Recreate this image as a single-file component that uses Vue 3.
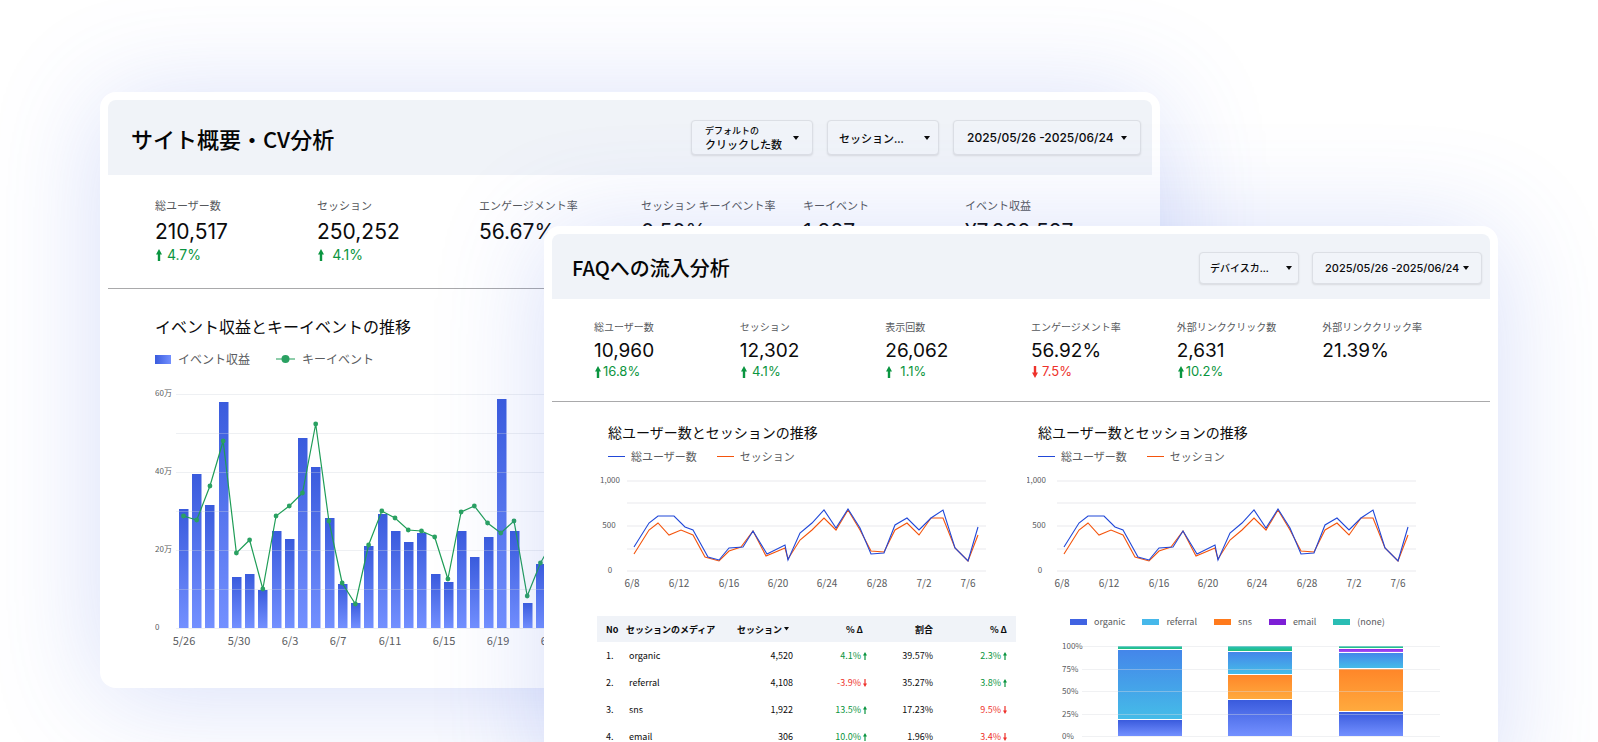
<script setup>
const overviewKpis = [
  { label: '総ユーザー数', value: '210,517', delta: '4.7%', up: true },
  { label: 'セッション', value: '250,252', delta: '4.1%', up: true },
  { label: 'エンゲージメント率', value: '56.67%' },
  { label: 'セッション キーイベント率', value: '0.50%' },
  { label: 'キーイベント', value: '1,227' },
  { label: 'イベント収益', value: '¥7,222,527' },
]

const faqKpis = [
  { label: '総ユーザー数', value: '10,960', delta: '16.8%', up: true },
  { label: 'セッション', value: '12,302', delta: '4.1%', up: true },
  { label: '表示回数', value: '26,062', delta: '1.1%', up: true },
  { label: 'エンゲージメント率', value: '56.92%', delta: '7.5%', up: false },
  { label: '外部リンククリック数', value: '2,631', delta: '10.2%', up: true },
  { label: '外部リンククリック率', value: '21.39%' },
]

const ARROW_UP = 'M3 0 6 5.5H4.2V12H1.8V5.5H0Z'
const ARROW_DOWN = 'M3 12 6 6.5H4.2V0H1.8V6.5H0Z'
const SMALL_UP = 'M2 0 4 3.5H2.6V8H1.4V3.5H0Z'
const SMALL_DOWN = 'M2 8 4 4.5H2.6V0H1.4V4.5H0Z'

/* revenue bars with key-event line */
const BASE = 248
const barHeights = [119, 154, 123, 226, 51, 54, 38, 97, 89, 190, 161, 110, 44, 25, 82, 114, 97, 86, 95, 54, 46, 97, 71, 91, 229, 97, 25, 64, 80, 70]
const lineHeights = [112, 108, 142, 187, 75, 88, 39, 112, 122, 135, 204, 107, 45, 24, 83, 117, 110, 98, 97, 91, 49, 116, 122, 105, 95, 107, 32, 65, 88, 76]
const bars = barHeights.map((h, i) => ({ x: 24 + Math.round(i * 13.24), y: BASE - h, h }))
const dots = lineHeights.map((h, i) => ({ x: 28.5 + i * 13.22, y: BASE - h }))
const dotLine = dots.map((d) => `${d.x},${d.y}`).join(' ')
const comboGrid = [14, 53, 92, 131, 170, 209, 248]
const comboY = [['60万', 14], ['40万', 92], ['20万', 170], ['0', 248]]
const comboX = [['5/26', 29], ['5/30', 84], ['6/3', 135], ['6/7', 183], ['6/11', 235], ['6/15', 289], ['6/19', 343], ['6/23', 397]]

/* users and sessions lines */
const users = [[37, 75], [52, 51], [61, 44], [77, 44], [88, 55], [96, 58], [111, 85], [122, 88], [132, 76], [146, 75], [156, 59], [170, 82], [188, 73], [191, 88], [203, 61], [215, 51], [227, 38], [239, 56], [251, 37], [263, 56], [274, 82], [287, 81], [298, 53], [310, 46], [322, 58], [334, 46], [346, 38], [358, 76], [371, 89], [381, 55]]
const sessions = [[37, 82], [52, 58], [61, 51], [72, 63], [84, 58], [96, 63], [108, 85], [122, 89], [132, 79], [144, 75], [156, 59], [169, 84], [188, 76], [191, 87], [203, 68], [215, 58], [227, 46], [239, 58], [251, 38], [263, 58], [274, 79], [287, 80], [298, 58], [310, 51], [322, 63], [334, 46], [346, 46], [358, 76], [371, 89], [381, 63]]
const asPoints = (list) => list.map((p) => p.join(',')).join(' ')
const trendGrid = [9, 31, 54, 77, 99]
const trendX = [['6/8', 35], ['6/12', 82], ['6/16', 132], ['6/20', 181], ['6/24', 230], ['6/28', 280], ['7/2', 327], ['7/6', 371]]
const trends = [
  { id: 'a', ticks: [['1,000', 13, 9], ['500', 12, 54], ['0', 13, 99]] },
  { id: 'b', ticks: [['1,000', 9, 9], ['500', 12, 54], ['0', 13, 99]] },
]

const rows = [
  { no: '1.', media: 'organic', count: '4,520', d1: '4.1%', up1: true, share: '39.57%', d2: '2.3%', up2: true },
  { no: '2.', media: 'referral', count: '4,108', d1: '-3.9%', up1: false, share: '35.27%', d2: '3.8%', up2: true },
  { no: '3.', media: 'sns', count: '1,922', d1: '13.5%', up1: true, share: '17.23%', d2: '9.5%', up2: false },
  { no: '4.', media: 'email', count: '306', d1: '10.0%', up1: true, share: '1.96%', d2: '3.4%', up2: false },
]

const channels = ['organic', 'referral', 'sns', 'email', '(none)']
const channelKey = (name) => name.replace(/[()]/g, '')
const stackY = [['100%', 8], ['75%', 31], ['50%', 53], ['25%', 76], ['0%', 98]]
const stacks = [
  { x: 91, parts: [['none', 8, 3], ['referral', 12, 69], ['organic', 82, 16]] },
  { x: 201, parts: [['none', 8, 5], ['referral', 14, 22], ['sns', 37, 24], ['organic', 62, 36]] },
  { x: 312, parts: [['none', 8, 2], ['email', 11, 3], ['referral', 15, 15], ['sns', 31, 42], ['organic', 74, 24]] },
]
</script>

<template>
  <main class="stage">
    <section class="card overview">
      <header class="head">
        <h1>サイト概要・CV分析</h1>
        <div class="controls">
          <label class="control metric">
            <span class="stack">
              <span class="prefix">デフォルトの</span>
              <select><option>クリックした数</option></select>
            </span>
          </label>
          <label class="control media">
            <select aria-label="セッション"><option>セッション...</option></select>
          </label>
          <button type="button" class="control date">2025/05/26 -2025/06/24</button>
        </div>
      </header>

      <dl class="kpis">
        <div v-for="k in overviewKpis" :key="k.label" class="kpi">
          <dt>{{ k.label }}</dt>
          <dd class="value">{{ k.value }}</dd>
          <dd v-if="k.delta" class="delta" :class="k.up ? 'up' : 'down'">
            <svg width="6" height="12" viewBox="0 0 6 12"><path :d="k.up ? ARROW_UP : ARROW_DOWN" /></svg>
            <span>{{ k.delta }}</span>
          </dd>
        </div>
      </dl>

      <div class="panel">
        <h2>イベント収益とキーイベントの推移</h2>
        <ul class="legend">
          <li><i class="swatch"></i>イベント収益</li>
          <li>
            <svg width="19" height="10" viewBox="0 0 19 10"><path d="M0 5H19" stroke="#1f9d57" /><circle cx="9.5" cy="5" r="4" fill="#2aa162" /></svg>
            キーイベント
          </li>
        </ul>
        <svg class="combo" width="425" height="280" viewBox="0 0 425 280">
          <defs>
            <linearGradient id="bar" x1="0" y1="0" x2="0" y2="1">
              <stop offset="0" stop-color="#3a5bdd" /><stop offset="1" stop-color="#7390ff" />
            </linearGradient>
          </defs>
          <rect v-for="b in bars" :key="b.x" :x="b.x" :y="b.y" width="9.5" :height="b.h" fill="url(#bar)" />
          <path v-for="y in comboGrid" :key="y" :d="`M21 ${y + 0.5}H425`" stroke="#cfd3dc" stroke-opacity=".35" />
          <polyline :points="dotLine" fill="none" stroke="#1f9d57" stroke-width="1.2" />
          <circle v-for="d in dots" :key="d.x" :cx="d.x" :cy="d.y" r="2.4" fill="#2aa162" />
          <text v-for="t in comboY" :key="t[0]" x="0" :y="t[1] + 2" font-size="8">{{ t[0] }}</text>
          <text v-for="t in comboX" :key="t[0]" :x="t[1]" y="265" font-size="11" text-anchor="middle">{{ t[0] }}</text>
        </svg>
      </div>
    </section>

    <section class="card faq">
      <header class="head">
        <h1>FAQへの流入分析</h1>
        <div class="controls">
          <label class="control device">
            <select aria-label="デバイスカテゴリ"><option>デバイスカ...</option></select>
          </label>
          <button type="button" class="control date">2025/05/26 -2025/06/24</button>
        </div>
      </header>

      <dl class="kpis">
        <div v-for="k in faqKpis" :key="k.label" class="kpi">
          <dt>{{ k.label }}</dt>
          <dd class="value">{{ k.value }}</dd>
          <dd v-if="k.delta" class="delta" :class="k.up ? 'up' : 'down'">
            <svg width="6" height="12" viewBox="0 0 6 12"><path :d="k.up ? ARROW_UP : ARROW_DOWN" /></svg>
            <span>{{ k.delta }}</span>
          </dd>
        </div>
      </dl>

      <div class="grid">
        <article v-for="t in trends" :key="t.id" class="trend">
          <h2>総ユーザー数とセッションの推移</h2>
          <ul class="legend">
            <li><i class="dash blue"></i>総ユーザー数</li>
            <li><i class="dash orange"></i>セッション</li>
          </ul>
          <svg class="plot" viewBox="0 0 419 120">
            <path v-for="y in trendGrid" :key="y" :d="`M30 ${y}H389`" stroke="#f1f1f3" stroke-width="1.4" />
            <polyline :points="asPoints(sessions)" fill="none" stroke="#f4540c" stroke-width="1.1" />
            <polyline :points="asPoints(users)" fill="none" stroke="#2148d8" stroke-width="1.1" />
            <text v-for="k in t.ticks" :key="k[0]" :x="k[1]" :y="k[2] + 2" font-size="8" text-anchor="middle">{{ k[0] }}</text>
            <text v-for="k in trendX" :key="k[0]" :x="k[1]" y="115" font-size="10" text-anchor="middle">{{ k[0] }}</text>
          </svg>
        </article>

        <table>
          <thead>
            <tr>
              <th class="no">No</th>
              <th class="name">セッションのメディア</th>
              <th class="count">セッション <svg width="5" height="6" viewBox="0 0 5 6"><path d="M0 0H5L2.5 3.5Z" /></svg></th>
              <th class="change">% Δ</th>
              <th class="share">割合</th>
              <th class="change">% Δ</th>
            </tr>
          </thead>
          <tbody>
            <tr v-for="r in rows" :key="r.no">
              <td class="no">{{ r.no }}</td>
              <td class="name">{{ r.media }}</td>
              <td class="count">{{ r.count }}</td>
              <td class="change" :class="r.up1 ? 'up' : 'down'">
                {{ r.d1 }} <svg width="4" height="8" viewBox="0 0 4 8"><path :d="r.up1 ? SMALL_UP : SMALL_DOWN" /></svg>
              </td>
              <td class="share">{{ r.share }}</td>
              <td class="change" :class="r.up2 ? 'up' : 'down'">
                {{ r.d2 }} <svg width="4" height="8" viewBox="0 0 4 8"><path :d="r.up2 ? SMALL_UP : SMALL_DOWN" /></svg>
              </td>
            </tr>
          </tbody>
        </table>

        <article class="share-chart">
          <ul class="channels">
            <li v-for="c in channels" :key="c"><i :class="channelKey(c)"></i>{{ c }}</li>
          </ul>
          <svg class="plot" viewBox="0 0 419 120">
            <defs>
              <linearGradient id="organic" x1="0" y1="0" x2="0" y2="1"><stop offset="0" stop-color="#3a5bdd" /><stop offset="1" stop-color="#7390ff" /></linearGradient>
              <linearGradient id="referral" x1="0" y1="0" x2="0" y2="1"><stop offset="0" stop-color="#4486ea" /><stop offset="1" stop-color="#45bce8" /></linearGradient>
              <linearGradient id="sns" x1="0" y1="0" x2="0" y2="1"><stop offset="0" stop-color="#ff8629" /><stop offset="1" stop-color="#ffaa3e" /></linearGradient>
              <linearGradient id="email" x1="0" y1="0" x2="0" y2="1"><stop offset="0" stop-color="#8a2be2" /><stop offset="1" stop-color="#a855f7" /></linearGradient>
              <linearGradient id="none" x1="0" y1="0" x2="0" y2="1"><stop offset="0" stop-color="#2cc0bd" /><stop offset="1" stop-color="#1fc07c" /></linearGradient>
            </defs>
            <template v-for="s in stacks" :key="s.x">
              <rect v-for="p in s.parts" :key="p[0]" :x="s.x" :y="p[1]" width="64" :height="p[2]" :fill="`url(#${p[0]})`" />
            </template>
            <path v-for="t in stackY" :key="t[0]" :d="`M55 ${t[1] + 0.5}H413`" stroke="#d9dbe2" stroke-opacity=".4" />
            <text v-for="t in stackY" :key="t[0]" x="35" :y="t[1] + 3" font-size="8">{{ t[0] }}</text>
          </svg>
        </article>
      </div>
    </section>
  </main>
</template>

<style>
body {
  background: #fff;
  overflow: hidden;
}
</style>

<style scoped>
* {
  box-sizing: border-box;
  margin: 0;
}

.stage {
  display: grid;
  grid-template-columns: 100px 444fr 616fr 338fr 100px;
  grid-template-rows: 92px 134px auto;
  height: 100vh;
  overflow: hidden;
  color: #0b0b0c;
  font-family: "Noto Sans CJK JP", "Noto Sans", sans-serif;
}

.card {
  align-self: start;
  min-width: 0;
  padding: 8px;
  background: #fff;
  border-radius: 16px;
  box-shadow: 0 8px 110px rgba(72, 104, 226, 0.22);
}

.overview {
  grid-area: 2 / 2 / 4 / 4;
}

.faq {
  grid-area: 3 / 3 / 4 / 5;
}

.head {
  display: flex;
  align-items: center;
  justify-content: space-between;
  background: #f0f3f8;
  border-radius: 8px 8px 0 0;
}

.overview .head {
  height: 75px;
  padding: 0 11px 0 23px;
}

.faq .head {
  height: 65px;
  padding: 2px 8px 0 20px;
}

h1,
h2 {
  font-weight: 400;
  white-space: nowrap;
}

h1 {
  font-weight: 500;
  color: #050505;
}

.overview h1 {
  font-size: 22px;
}

.faq h1 {
  font-size: 20px;
}

.controls {
  display: flex;
}

.overview .controls {
  gap: 14px;
}

.faq .controls {
  gap: 13px;
}

.control {
  display: flex;
  align-items: center;
  justify-content: space-between;
  border: 1px solid #dcdfe5;
  border-radius: 4px;
  background: #f1f4f9;
  box-shadow: 0 1px 2px rgba(0, 0, 0, 0.1);
  color: #0b0b0c;
  font-family: inherit;
  font-weight: 500;
  white-space: nowrap;
}

.control::after {
  content: "";
  border: 3px solid transparent;
  border-top: 4px solid #0b0b0c;
  border-bottom: 0;
}

.overview .control {
  height: 35px;
  padding: 0 13px;
  font-size: 11px;
}

.faq .control {
  height: 32px;
  font-size: 10px;
}

.overview .metric {
  width: 122px;
}

.overview .media {
  width: 112px;
  padding: 0 8px 0 11px;
}

.overview .control.date {
  width: 188px;
  font-size: 12px;
}

.faq .device {
  width: 100px;
  padding: 0 6px 0 10px;
}

.faq .control.date {
  width: 170px;
  padding: 0 12px;
  font-size: 11px;
}

.control.date {
  font-family: Inter, sans-serif;
}

.stack {
  display: flex;
  flex-direction: column;
}

.prefix {
  font-size: 9px;
  line-height: 12px;
}

select {
  appearance: none;
  padding: 0;
  border: 0;
  background: transparent;
  color: inherit;
  font: inherit;
  line-height: 14px;
}

.kpis {
  display: grid;
  grid-template-columns: repeat(6, minmax(0, 1fr));
  border-bottom: 1px solid #a9a9ab;
}

.overview .kpis {
  height: 114px;
  padding: 21px 25px 0 47px;
}

.faq .kpis {
  height: 103px;
  padding: 20px 22px 0 42px;
}

.kpi {
  white-space: nowrap;
}

.kpi dt {
  color: #56585c;
}

.value,
.delta {
  font-family: Inter, sans-serif;
}

.overview dt {
  font-size: 11px;
  line-height: 18px;
}

.overview .value {
  margin-top: 4px;
  font-size: 21px;
  line-height: 28px;
}

.faq dt {
  font-size: 10px;
  line-height: 16px;
}

.faq .value {
  margin-top: 4px;
  font-size: 19px;
  line-height: 24px;
}

.delta {
  display: flex;
  align-items: center;
  gap: 2px;
  padding-left: 1px;
  font-size: 13px;
  line-height: 17px;
}

.delta span {
  min-width: 32px;
  text-align: right;
}

.overview .delta {
  font-size: 14px;
  line-height: 18px;
}

.overview .delta span {
  min-width: 37px;
}

.up {
  color: #0a9540;
}

.down {
  color: #ee322b;
}

.up svg,
.down svg,
th svg {
  fill: currentColor;
}

td svg {
  vertical-align: -1px;
}

.panel {
  padding: 25px 0 20px 47px;
}

.panel h2 {
  font-size: 16px;
  line-height: 24px;
}

.legend,
.channels {
  display: flex;
  padding: 0;
  list-style: none;
  color: #5a5c60;
  white-space: nowrap;
}

.legend li,
.channels li {
  display: flex;
  align-items: center;
}

.panel .legend {
  gap: 26px;
  margin-top: 12px;
  font-size: 12px;
  line-height: 18px;
}

.panel .legend li {
  gap: 7px;
}

.swatch {
  width: 16px;
  height: 9px;
  background: linear-gradient(90deg, #3a5bdd, #7390ff);
}

.combo {
  display: block;
  margin-top: 12px;
}

svg text {
  fill: #5a5c60;
}

.grid {
  display: grid;
  grid-template-columns: repeat(2, minmax(0, 1fr));
  gap: 24px 11px;
  align-items: start;
  padding: 20px 44px 24px 45px;
}

.trend h2 {
  padding-left: 11px;
  font-size: 14px;
  line-height: 20px;
}

.trend .legend {
  gap: 20px;
  margin: 6px 0 8px;
  padding-left: 11px;
  font-size: 11px;
  line-height: 16px;
}

.trend .legend li {
  gap: 6px;
}

.dash {
  width: 17px;
  height: 1px;
}

.blue {
  background: #2148d8;
}

.orange {
  background: #f4540c;
}

.plot {
  display: block;
  width: 100%;
}

table {
  width: 100%;
  border-collapse: collapse;
  table-layout: fixed;
  font-size: 9px;
  line-height: 13px;
}

th,
td {
  height: 27px;
  padding: 0;
  text-align: right;
  white-space: nowrap;
}

th {
  height: 26px;
  background: #f0f3f8;
  font-weight: 700;
}

.no {
  width: 29px;
  padding-left: 9px;
  text-align: left;
}

.name {
  width: 104px;
  text-align: left;
}

td.name {
  padding-left: 3px;
}

.count {
  width: 63px;
}

th.count {
  padding-right: 4px;
}

.change {
  width: 74px;
}

th.change {
  padding-right: 4px;
}

.share {
  width: 66px;
}

th.change:last-child,
td.change:last-child {
  width: auto;
  padding-right: 9px;
}

.channels {
  gap: 17px;
  padding-left: 43px;
  font-size: 9px;
  line-height: 12px;
}

.channels li {
  gap: 7px;
}

.channels i {
  width: 17px;
  height: 6px;
}

.organic {
  background: #4063e2;
}

.referral {
  background: #46b8ea;
}

.sns {
  background: #ff7a1c;
}

.email {
  background: #7d1fd6;
}

.none {
  background: #2abdb4;
}

.share-chart .plot {
  margin-top: 10px;
}
</style>
